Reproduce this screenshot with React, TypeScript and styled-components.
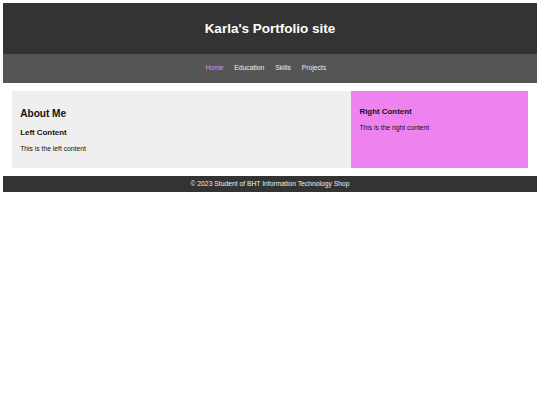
import styled, { createGlobalStyle } from 'styled-components';

const GlobalStyle = createGlobalStyle`
    body {
        margin: 3.4px;
        font-family: 'Liberation Sans', Arial, sans-serif;
        font-size: 6.75px;
        line-height: 7.8px;
        color: #111;
        background: #fff;
    }
`;

const Header = styled.header`
    background: #333;
    color: #fff;
    text-align: center;
    padding: 8.4px;
`;

const Title = styled.h1`
    font-size: 13.5px;
    line-height: 15.5px;
    font-weight: bold;
    margin: 9px 0;
`;

const Nav = styled.nav`
    background: #555;
    padding: 10.6px 0;
`;

const NavList = styled.ul`
    display: flex;
    justify-content: center;
    gap: 10.8px;
    list-style: none;
    margin: 0;
    padding: 0 8.4px 0 0;
`;

const NavLink = styled.a<{ active?: boolean }>`
    color: ${(p) => (p.active ? 'violet' : '#eee')};
    text-decoration: none;
`;

const Main = styled.main`
    padding: 8.4px;
`;

const Columns = styled.div`
    display: grid;
    grid-template-columns: 339fr 177fr;
`;

const Panel = styled.section<{ tone: string }>`
    background: ${(p) => p.tone};
    padding: 8.4px;
`;

const Heading = styled.h2`
    font-size: 10.1px;
    line-height: 11.6px;
    margin: 8.4px 0;
`;

const SubHeading = styled.h3`
    font-size: 7.9px;
    line-height: 9.1px;
    margin: 7.9px 0;
`;

const Text = styled.p`
    margin: 6.75px 0;
`;

const Footer = styled.footer`
    background: #333;
    color: #eee;
    text-align: center;
    padding: 4.2px;
`;

const links = ['Home', 'Education', 'Skills', 'Projects'];

export default function App() {
    return (
        <>
            <GlobalStyle />
            <Header>
                <Title>Karla's Portfolio site</Title>
            </Header>
            <Nav>
                <NavList>
                    {links.map((l, i) => (
                        <li key={l}>
                            <NavLink href="#" active={i === 0}>
                                {l}
                            </NavLink>
                        </li>
                    ))}
                </NavList>
            </Nav>
            <Main>
                <Columns>
                    <Panel tone="#efefef">
                        <Heading>About Me</Heading>
                        <SubHeading>Left Content</SubHeading>
                        <Text>This is the left content</Text>
                    </Panel>
                    <Panel tone="violet">
                        <SubHeading>Right Content</SubHeading>
                        <Text>This is the right content</Text>
                    </Panel>
                </Columns>
            </Main>
            <Footer>© 2023 Student of BHT Information Technology Shop</Footer>
        </>
    );
}
